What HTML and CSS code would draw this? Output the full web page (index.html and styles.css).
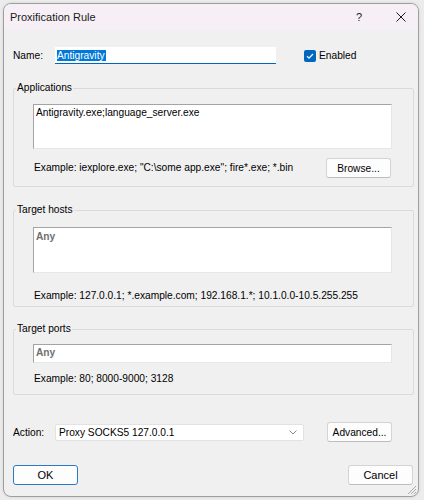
FILE: index.html
```html
<!DOCTYPE html>
<html lang="en">
<head>
  <meta charset="UTF-8">
  <meta name="viewport" content="width=device-width, initial-scale=1.0">
  <title>Proxification Rule</title>
  <link rel="stylesheet" href="styles.css">
</head>
<body>
  <div class="desktop">
    <div class="window">
      <div class="titlebar">
        <span class="title">Proxification Rule</span>
        <span class="caption-help">?</span>
        <span class="caption-close">
          <svg width="10" height="10" viewBox="0 0 10 10"><path d="M0.5 0.5 L9.5 9.5 M9.5 0.5 L0.5 9.5" stroke="#1a1a1a" stroke-width="1" fill="none"/></svg>
        </span>
      </div>

      <div class="content">
        <!-- Rule name -->
        <div class="name-row">
          <span class="label">Name:</span>
          <div class="name-input"><span class="selection">Antigravity</span></div>
          <div class="enabled">
            <span class="checkbox">
              <svg width="12" height="12" viewBox="0 0 12 12"><path d="M3 6.2 L5 8.2 L9 4" stroke="#fff" stroke-width="1.2" fill="none"/></svg>
            </span>
            <span>Enabled</span>
          </div>
        </div>

        <!-- Applications -->
        <fieldset class="group group-apps">
          <legend>Applications</legend>
          <div class="edit edit-apps">Antigravity.exe;language_server.exe</div>
          <div class="hint-row">
            <span class="hint">Example: iexplore.exe; "C:\some app.exe"; fire*.exe; *.bin</span>
            <button class="btn btn-side">Browse...</button>
          </div>
        </fieldset>

        <!-- Target hosts -->
        <fieldset class="group group-hosts">
          <legend>Target hosts</legend>
          <div class="edit edit-hosts"><span class="placeholder">Any</span></div>
          <div class="hint-row">
            <span class="hint">Example: 127.0.0.1; *.example.com; 192.168.1.*; 10.1.0.0-10.5.255.255</span>
          </div>
        </fieldset>

        <!-- Target ports -->
        <fieldset class="group group-ports">
          <legend>Target ports</legend>
          <div class="edit edit-ports"><span class="placeholder">Any</span></div>
          <div class="hint-row">
            <span class="hint">Example: 80; 8000-9000; 3128</span>
          </div>
        </fieldset>

        <!-- Action -->
        <div class="action-row">
          <span class="label">Action:</span>
          <div class="select">
            <span>Proxy SOCKS5 127.0.0.1</span>
            <svg width="8" height="5" viewBox="0 0 8 5"><path d="M0.5 0.5 L4 4 L7.5 0.5" stroke="#8a8a8a" stroke-width="1" fill="none"/></svg>
          </div>
          <button class="btn btn-side">Advanced...</button>
        </div>

        <div class="dialog-buttons">
          <button class="btn btn-dialog btn-default">OK</button>
          <button class="btn btn-dialog">Cancel</button>
        </div>
      </div>

      <svg class="grip" width="10" height="10" viewBox="0 0 10 10">
        <path d="M9 1 L1 9 M9 4 L4 9 M9 7 L7 9" stroke="#a8a8a8" stroke-width="1" fill="none"/>
      </svg>
    </div>
  </div>
</body>
</html>
```

FILE: styles.css
```css
body {
  margin: 0;
  background: #ececec;
  font-family: "Liberation Sans", Arial, sans-serif;
  font-size: 10.2px;
  color: #000;
}

.desktop {
  padding: 3px;
}

.window {
  position: relative;
  width: 416px;
  height: 494px;
  box-sizing: border-box;
  border: 1px solid #9f9f9f;
  border-radius: 8px;
  background: #f0f0f0;
  overflow: hidden;
  box-shadow: 0 0 3px rgba(0, 0, 0, 0.12);
}

.titlebar {
  height: 26px;
  box-sizing: border-box;
  display: flex;
  align-items: center;
  padding: 0 12px 1px 6px;
  background: #f6f0f6;
  font-size: 11px;
  color: #1a1a1a;
}

.caption-help {
  margin-left: auto;
  width: 10px;
  text-align: center;
  font-size: 11px;
}

.caption-close {
  margin-left: 32px;
  display: flex;
}

.content {
  padding: 0 4px 0 9px;
}

.label {
  width: 42px;
  flex-shrink: 0;
}

/* name + enabled */
.name-row {
  display: flex;
  align-items: center;
  height: 17px;
  margin-top: 17px;
}

.name-input {
  width: 221px;
  height: 17px;
  box-sizing: border-box;
  background: #fff;
  border-bottom: 1px solid #0067c0;
  padding-left: 2px;
  display: flex;
  align-items: center;
}

.selection {
  background: #0078d7;
  color: #fff;
  line-height: 11px;
  padding: 0 1px 0 0;
}

.enabled {
  margin-left: 28px;
  display: flex;
  align-items: center;
  gap: 3px;
}

.checkbox {
  width: 12px;
  height: 12px;
  border-radius: 2px;
  background: #0067c0;
  display: flex;
}

/* group boxes */
.group {
  margin: 0;
  border: 1px solid #dadada;
  border-radius: 2px;
  padding: 9px 0 8px 2px;
  min-width: 0;
}

.group legend {
  padding: 0 1px;
  line-height: 14px;
}

.group-apps {
  margin-top: 17px;
}

.group-hosts {
  margin-top: 16px;
  padding-top: 10px;
  padding-bottom: 3px;
}

.group-ports {
  margin-top: 15px;
  padding-top: 8px;
}

.edit {
  margin-left: 17px;
  width: 359px;
  box-sizing: border-box;
  background: #fff;
  border: 1px solid #e6e6e6;
  border-top-color: #a4a4a4;
  border-left-color: #a4a4a4;
  padding: 1px 2px;
  line-height: 14px;
}

.edit-apps {
  height: 45px;
}

.edit-hosts {
  height: 46px;
  padding-top: 2px;
}

.edit-ports {
  height: 19px;
}

.placeholder {
  color: #6f6f6f;
  font-weight: bold;
}

.hint-row {
  margin-left: 18px;
  width: 357px;
  display: flex;
  justify-content: space-between;
  align-items: center;
  line-height: 14px;
}

.group-apps .hint-row {
  margin-top: 9px;
  height: 20px;
}

.group-hosts .hint-row {
  margin-top: 16px;
}

.group-ports .hint-row {
  margin-top: 9px;
}

/* buttons */
.btn {
  font-family: inherit;
  font-size: 10.2px;
  color: #000;
  background: #fdfdfd;
  border: 1px solid #d4d4d4;
  border-bottom-color: #bdbdbd;
  border-radius: 3px;
  padding: 0;
  height: 20px;
}

.btn-side {
  width: 65px;
}

.btn-dialog {
  width: 65px;
  font-size: 11px;
}

.btn-default {
  border: 1px solid #2b78c8;
}

/* action */
.action-row {
  display: flex;
  align-items: center;
  height: 20px;
  margin-top: 27px;
}

.select {
  width: 249px;
  height: 17px;
  box-sizing: border-box;
  background: #fff;
  border: 1px solid #e2e2e2;
  border-radius: 2px;
  display: flex;
  align-items: center;
  justify-content: space-between;
  padding: 0 6px 0 3px;
}

.action-row .btn-side {
  margin-left: 23px;
}

.dialog-buttons {
  display: flex;
  justify-content: space-between;
  margin-top: 23px;
  padding-right: 1px;
}

.grip {
  position: absolute;
  right: 1px;
  bottom: 1px;
}
```
